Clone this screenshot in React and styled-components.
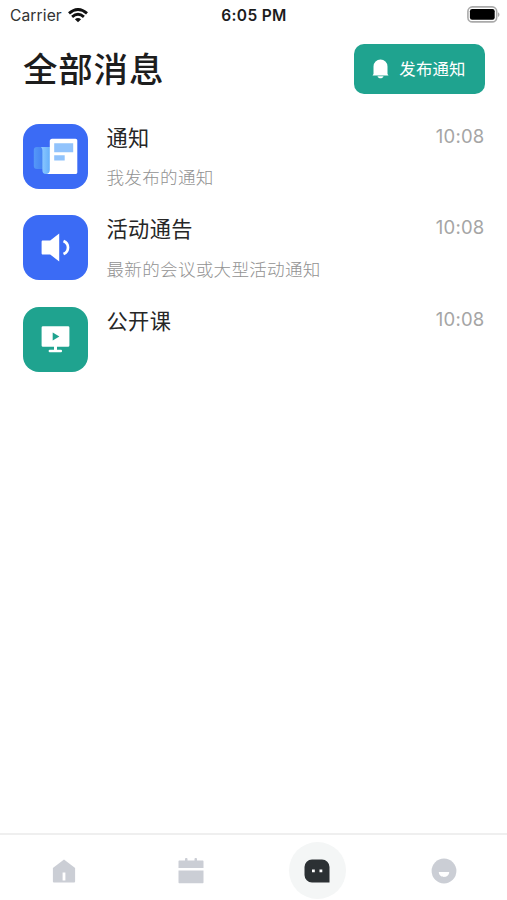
import React from "react";
import styled, { createGlobalStyle } from "styled-components";

const GlobalStyle = createGlobalStyle`
  * { box-sizing: border-box; }
  body { margin: 0; background: #fff; }
`;

const Screen = styled.div`
  width: 100%;
  height: 100vh;
  display: flex;
  flex-direction: column;
  overflow: hidden;
  background: #fff;
  color: #222;
  font-family: Inter, "Noto Sans CJK SC", sans-serif;
`;

const StatusBar = styled.div`
  height: 30px;
  padding: 0 7px 0 10px;
  display: grid;
  grid-template-columns: 1fr auto 1fr;
  align-items: center;
  color: #1c1c1c;
`;

const Carrier = styled.div`
  display: flex;
  align-items: center;
  gap: 6px;
  font-size: 15.6px;
  letter-spacing: 0.1px;
  color: #333;
`;

const Clock = styled.div`
  font-size: 15.5px;
  font-weight: 600;
  letter-spacing: 0.35px;
  padding-right: 2px;
`;

const Battery = styled.svg`
  justify-self: end;
  display: block;
  margin-bottom: 2px;
`;

const Header = styled.header`
  height: 78px;
  padding: 0 22px 0 23px;
  display: flex;
  align-items: center;
  justify-content: space-between;
`;

const Heading = styled.h1`
  margin: 2px 0 0;
  font-size: 34.5px;
  font-weight: 500;
  line-height: 50px;
  letter-spacing: 0.8px;
  color: #1d1d1d;
`;

const PublishButton = styled.button`
  width: 131px;
  height: 50px;
  padding: 0 1px 0 0;
  display: flex;
  align-items: center;
  justify-content: center;
  gap: 10px;
  border: 0;
  border-radius: 10px;
  background: #1fa38f;
  color: #fff;
  font: 400 16.4px/24px Inter, "Noto Sans CJK SC", sans-serif;
  letter-spacing: 0.2px;
  svg { display: block; }
`;

const List = styled.main`
  flex: 1;
  padding: 15.6px 22.5px 0;
  display: flex;
  flex-direction: column;
  gap: 26.7px;
`;

const Row = styled.article`
  height: 65px;
  display: flex;
`;

const Tile = styled.div`
  width: 65px;
  height: 65px;
  flex: none;
  border-radius: 16px;
  background: ${(p) => p.$color};
  svg { display: block; }
`;

const Texts = styled.div`
  flex: 1;
  padding-left: 19px;
`;

const Title = styled.div`
  font-size: 21.2px;
  line-height: 28px;
  letter-spacing: 0.4px;
  color: #262626;
`;

const Subtitle = styled.div`
  margin-top: 13.4px;
  font-size: 17.6px;
  font-weight: 300;
  line-height: 26px;
  letter-spacing: 0.25px;
  color: #929292;
`;

const Time = styled.time`
  font-size: 18.5px;
  line-height: 24px;
  letter-spacing: 0.2px;
  color: #a5a5a5;
`;

const TabBar = styled.nav`
  height: 67px;
  display: grid;
  grid-template-columns: repeat(4, 1fr);
  border-top: 2px solid #efefef;
  padding: 7px 0 0 1px;
`;

const Tab = styled.div`
  width: 57px;
  height: 57px;
  justify-self: center;
  display: flex;
  align-items: center;
  justify-content: center;
  border-radius: 50%;
  background: ${(p) => (p.$active ? "#f4f6f6" : "transparent")};
  svg { display: block; }
`;

const WifiIcon = () => (
  <svg width="20" height="15" viewBox="0 0 20 15" fill="none" stroke="#111" strokeWidth="2.9">
    <path d="M1 5.4Q10-2.4 19 5.4" />
    <path d="M4.1 8.8Q10 3.8 15.9 8.800" />
    <path d="M10 14.2 6.9 11.2Q10 8.8 13.1 11.2Z" fill="#111" stroke="none" />
  </svg>
);

const BatteryIcon = () => (
  <Battery width="33" height="18" viewBox="0 0 33 18">
    <rect x="0.9" y="1.9" width="28.8" height="15" rx="4.5" fill="#fff" stroke="#aaa" strokeWidth="1.6" />
    <rect x="2.9" y="4" width="24.800" height="10.800" rx="2.200" fill="#000" />
    <path d="M31 7.200c2 1 2 3.700 0 4.700z" fill="#aaa" />
  </Battery>
);

const BellIcon = () => (
  <svg width="17" height="20" viewBox="0 0 17 20" fill="#fff">
    <path d="M1.5 15V7.4a7 7 0 0 1 14 0V15l1 1.600H.5zM5.500 17.300h6c-.7 2.700-5.300 2.700-6 0z" />
  </svg>
);

const NewsIcon = () => (
  <svg width="65" height="65" viewBox="0 0 65 65">
    <defs>
      <linearGradient id="backFold">
        <stop offset="0" stopColor="#5598f8" />
        <stop offset="1" stopColor="#4380f2" />
      </linearGradient>
      <linearGradient id="frontFold">
        <stop offset="0" stopColor="#8fcaff" />
        <stop offset="1" stopColor="#62aefb" />
      </linearGradient>
    </defs>
    <path d="M14 23h7v22h-7c-2.200 0-3.200-1-3.200-3V26c0-2 1-3 3.200-3z" fill="url(#backFold)" />
    <path d="M18 23h9.500v27H23c-2.600 0-3.600-1.500-3.600-4V27.500c0-2-.2-3.300-1.400-4.500z" fill="url(#frontFold)" />
    <path d="M29 14.800h23.500c1 0 1.800.8 1.800 1.800v31.600c0 1-.8 1.800-1.800 1.800H23.500c2.500-.3 3.300-2 3.300-4.200V17c0-1.200 1-2.200 2.200-2.200z" fill="#fff" />
    <path d="M31.200 19.200h19v9h-19zM31.200 31.200h10.500v5.200H31.200z" fill="#91c3fc" />
  </svg>
);

const SpeakerIcon = () => (
  <svg width="65" height="65" viewBox="0 0 65 65">
    <path d="M20 25.600h7.200l9-7v28l-9-7H20c-1 0-1.400-.6-1.400-1.400V27c0-.9.500-1.400 1.400-1.400z" fill="#fff" />
    <path d="M40.500 26c6 2.600 6 10.500 0 13.100" fill="none" stroke="#fff" strokeWidth="2.700" />
  </svg>
);

const ScreenIcon = () => (
  <svg width="65" height="65" viewBox="0 0 65 65">
    <path d="M20 19.2h25a1.400 1.400 0 0 1 1.400 1.400v17.800a1.400 1.400 0 0 1-1.400 1.400H34v3h4.200c1.200 0 1.200 2.400 0 2.400H26.500c-1.200 0-1.200-2.400 0-2.400H31v-3H20a1.400 1.400 0 0 1-1.400-1.400V20.600a1.400 1.400 0 0 1 1.400-1.400z" fill="#fff" />
    <path d="M29.700 25.500v8l6.700-4z" fill="#1fa38f" />
  </svg>
);

const HomeIcon = () => (
  <svg width="24" height="24" viewBox="0 0 24 24">
    <path d="M12 .5 23.100 9v13.500a1 1 0 0 1-1 1H1.900a1 1 0 0 1-1-1V9z" fill="#cbced5" />
    <path d="M10.600 13.500h2.800v8h-2.800z" fill="#fff" />
  </svg>
);

const CalendarIcon = () => (
  <svg width="26" height="26" viewBox="0 0 26 26" fill="#cbced5">
    <path d="M1.500 2.500H7V.8c0-1 2.500-1 2.500 0v1.700h7V.8c0-1 2.500-1 2.500 0v1.700h5.500c.7 0 1 .3 1 1V10H.5V3.500c0-.7.300-1 1-1zM.500 12.500h25v11.800c0 .7-.3 1-1 1h-23c-.7 0-1-.3-1-1z" />
  </svg>
);

const MessageIcon = () => (
  <svg width="26" height="24" viewBox="0 0 26 24">
    <path d="M8 .5h10a7.500 7.500 0 0 1 7.500 7.500v15.500H8A7.500 7.500 0 0 1 .5 16V8A7.500 7.500 0 0 1 8 .5z" fill="#2c3134" />
    <path d="M8 10.500h2.800v2.800H8zM15.500 10.500h2.800v2.800h-2.800z" fill="#fff" />
  </svg>
);

const FaceIcon = () => (
  <svg width="26" height="26" viewBox="0 0 26 26">
    <circle cx="13" cy="13" r="12.400" fill="#cbced5" />
    <path d="M7.800 14h10.400c-.2 6.600-10.200 6.600-10.400 0z" fill="#fff" />
  </svg>
);

const messages = [
  { title: "通知", subtitle: "我发布的通知", color: "#3b6bf5", Icon: NewsIcon },
  { title: "活动通告", subtitle: "最新的会议或大型活动通知", color: "#3b6bf5", Icon: SpeakerIcon },
  { title: "公开课", color: "#1fa38f", Icon: ScreenIcon },
];

export default function App() {
  return (
    <Screen>
      <GlobalStyle />
      <StatusBar>
        <Carrier>Carrier <WifiIcon /></Carrier>
        <Clock>6:05 PM</Clock>
        <BatteryIcon />
      </StatusBar>
      <Header>
        <Heading>全部消息</Heading>
        <PublishButton><BellIcon />发布通知</PublishButton>
      </Header>
      <List>
        {messages.map(({ title, subtitle, color, Icon }) => (
          <Row key={title}>
            <Tile $color={color}><Icon /></Tile>
            <Texts>
              <Title>{title}</Title>
              {subtitle && <Subtitle>{subtitle}</Subtitle>}
            </Texts>
            <Time>10:08</Time>
          </Row>
        ))}
      </List>
      <TabBar>
        <Tab><HomeIcon /></Tab>
        <Tab><CalendarIcon /></Tab>
        <Tab $active><MessageIcon /></Tab>
        <Tab><FaceIcon /></Tab>
      </TabBar>
    </Screen>
  );
}
